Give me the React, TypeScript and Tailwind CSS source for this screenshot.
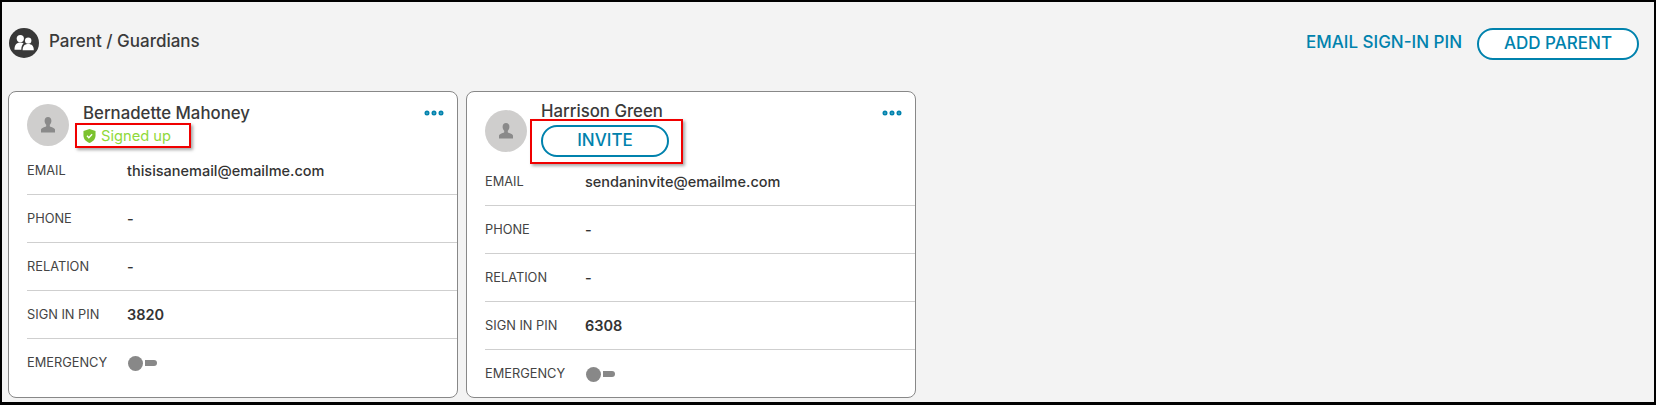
import { MoreHorizontal } from 'lucide-react'

const font = { fontFamily: 'Inter, "Liberation Sans", sans-serif' }

function PeopleIcon() {
  return (
    <svg viewBox="0 0 30 30" className="w-[30px] h-[30px]">
      <circle cx="15" cy="15" r="15" fill="#383838" />
      <circle cx="11.3" cy="10.6" r="3.6" fill="#fff" />
      <path d="M5.500 21.800c0-5 2.200-7.300 5.800-7.300 1.400 0 2.500.3 3.300.9-1.500 1.100-2.300 3.100-2.300 6.400z" fill="#fff" />
      <circle cx="19.200" cy="12.600" r="3.200" fill="#fff" />
      <path d="M13.600 22.200c0-4.300 2-6.300 5.600-6.300s5.600 2 5.600 6.300z" fill="#fff" />
    </svg>
  )
}

function Avatar() {
  return (
    <div className="w-[42px] h-[42px] rounded-full bg-[#cfcecd] flex items-center justify-center shrink-0">
      <svg viewBox="0 0 16 16" className="w-4 h-4" fill="#8a8a8a">
        <path d="M8 0c2.100 0 3.400 1.500 3.400 3.700 0 1.700-.7 3.200-1.600 4.100v1.500c0 .6 4.400 1.200 5.200 3.200V15.500H1v-3c.8-2 5.200-2.600 5.200-3.200V7.800C5.300 6.900 4.600 5.400 4.600 3.700 4.600 1.500 5.900 0 8 0z" />
      </svg>
    </div>
  )
}

function ShieldIcon() {
  return (
    <svg viewBox="0 0 14 15" className="w-[13px] h-[14px] shrink-0">
      <path d="M7 0l6.500 2v5c0 4-3 6.700-6.500 8C3.500 13.700.5 11 .5 7V2z" fill="#7cc22e" />
      <path d="M4.300 7.300l2 2 3.500-3.600" stroke="#fff" strokeWidth="1.500" fill="none" />
    </svg>
  )
}

function Row({ label, last, children }: { label: string; last?: boolean; children: React.ReactNode }) {
  return (
    <div className={`flex items-center h-[48px] ${last ? '' : 'border-b border-[#cfcfcf]'}`}>
      <div className="w-[100px] text-[12.8px] text-[#444]">{label}</div>
      <div className="text-[14.5px] text-[#333] font-medium">{children}</div>
    </div>
  )
}

function Toggle() {
  return (
    <div className="flex items-center ml-[1px]">
      <div className="w-[15px] h-[15px] rounded-full bg-[#888]" />
      <div className="w-[12px] h-[6px] rounded-r-full bg-[#888] ml-[2px]" />
    </div>
  )
}

function Card({ header, email, pin }: { header: React.ReactNode; email: string; pin: string }) {
  return (
    <div className="relative w-[450px] h-[307px] bg-white border border-[#888] rounded-[8px] pl-[18px]">
      <button className="absolute right-[11px] top-[9px] text-[#0082ad]">
        <MoreHorizontal size={24} strokeWidth={3} />
      </button>
      {header}
      <Row label="EMAIL">{email}</Row>
      <Row label="PHONE">-</Row>
      <Row label="RELATION">-</Row>
      <Row label="SIGN IN PIN"><span className="font-semibold">{pin}</span></Row>
      <Row label="EMERGENCY" last><Toggle /></Row>
    </div>
  )
}

export default function App() {
  return (
    <div style={font} className="w-[1656px] h-[405px] bg-[#f3f3f3] border-t-2 border-l-2 border-r-2 border-b-[3px] border-black overflow-hidden">
      <div className="flex items-start justify-between pl-[7px] pr-[15px] pt-[26px] h-[89px]">
        <div className="flex items-center gap-[10px]">
          <PeopleIcon />
          <span className="text-[17px] font-medium text-[#3a3a3a] -mt-[2px]">Parent / Guardians</span>
        </div>
        <div className="flex items-center gap-[15px]">
          <button className="text-[17px] font-medium text-[#0082ad] -mt-[2px]">EMAIL SIGN-IN PIN</button>
          <button className="w-[162px] h-[32px] rounded-full border-2 border-[#0082ad] bg-white text-[17px] font-medium text-[#0082ad]">ADD PARENT</button>
        </div>
      </div>
      <div className="flex gap-[8px] pl-[6px]">
        <Card
          email="thisisanemail@emailme.com"
          pin="3820"
          header={
            <div className="flex gap-[14px] h-[55px] items-start">
              <div className="mt-[12px]"><Avatar /></div>
              <div className="mt-[11px]">
                <div className="text-[16.8px] font-medium text-[#3a3a3a] leading-[20px]">Bernadette Mahoney</div>
                <div className="relative flex items-center gap-[5px] mt-[3px] text-[14.700px] text-[#8fd93a] leading-[20px]">
                  <ShieldIcon />
                  Signed up
                  <div className="absolute -left-[8px] -top-[3px] w-[116px] h-[25px] border-2 border-[#f00000] shadow-[2px_2px_3px_rgba(0,0,0,0.35)]" />
                </div>
              </div>
            </div>
          }
        />
        <Card
          email="sendaninvite@emailme.com"
          pin="6308"
          header={
            <div className="flex gap-[14px] h-[66px] items-start">
              <div className="mt-[18px]"><Avatar /></div>
              <div className="mt-[9px]">
                <div className="text-[16.8px] font-medium text-[#3a3a3a] leading-[20px]">Harrison Green</div>
                <div className="relative mt-[4px]">
                  <button className="w-[128px] h-[32px] rounded-full border-2 border-[#0082ad] bg-white text-[17px] font-medium text-[#0082ad]">INVITE</button>
                  <div className="absolute -left-[11px] -top-[6px] w-[153px] h-[45px] border-2 border-[#f00000] shadow-[2px_2px_3px_rgba(0,0,0,0.35)]" />
                </div>
              </div>
            </div>
          }
        />
      </div>
    </div>
  )
}
